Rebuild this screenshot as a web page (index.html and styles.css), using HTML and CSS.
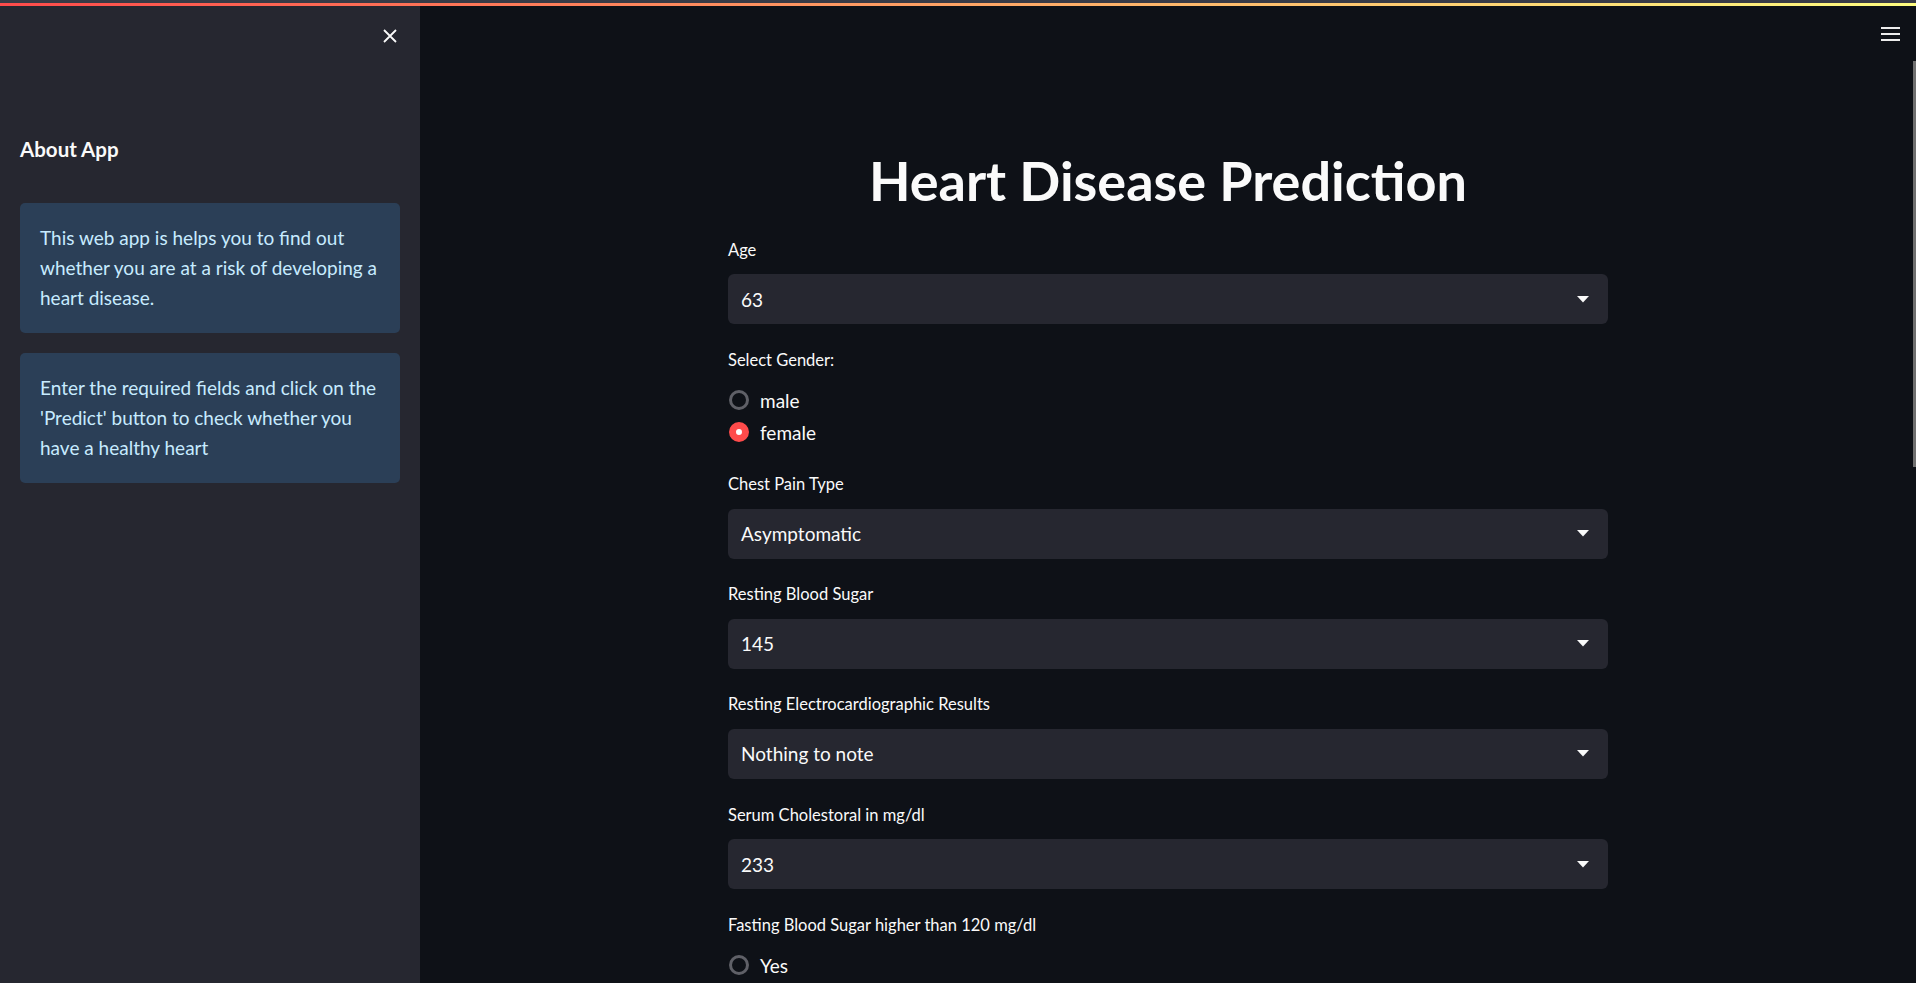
FILE: index.html
```html
<!DOCTYPE html>
<html lang="en">
<head>
<meta charset="utf-8">
<title>Heart Disease Prediction</title>
<link rel="stylesheet" href="styles.css">
</head>
<body>
<div class="page">
  <div class="topbar"><div class="topbar-dark"></div><div class="topbar-grad"></div></div>
  <div class="app">
    <aside class="sidebar">
      <div class="side-head">
        <svg class="close-icon" width="14" height="14" viewBox="0 0 14 14"><path d="M1 1 L13 13 M13 1 L1 13" stroke="#fafafa" stroke-width="1.8" fill="none"/></svg>
      </div>
      <h3 class="side-title">About App</h3>
      <div class="info">This web app is helps you to find out whether you are at a risk of developing a heart disease.</div>
      <div class="info">Enter the required fields and click on the 'Predict' button to check whether you have a healthy heart</div>
    </aside>
    <main class="main">
      <div class="main-head">
        <div class="menu"><span></span><span></span><span></span></div>
      </div>
      <div class="content">
        <h1 class="title">Heart Disease Prediction</h1>

        <div class="field">
          <div class="label">Age</div>
          <div class="select"><span>63</span><svg class="caret" width="12" height="7" viewBox="0 0 12 7"><path d="M0 0 H12 L6 6.5 Z" fill="#fafafa"/></svg></div>
        </div>

        <div class="field">
          <div class="label">Select Gender:</div>
          <div class="radios">
            <div class="radio"><span class="dot"></span><span>male</span></div>
            <div class="radio"><span class="dot on"></span><span>female</span></div>
          </div>
        </div>

        <div class="field">
          <div class="label">Chest Pain Type</div>
          <div class="select"><span>Asymptomatic</span><svg class="caret" width="12" height="7" viewBox="0 0 12 7"><path d="M0 0 H12 L6 6.5 Z" fill="#fafafa"/></svg></div>
        </div>

        <div class="field">
          <div class="label">Resting Blood Sugar</div>
          <div class="select"><span>145</span><svg class="caret" width="12" height="7" viewBox="0 0 12 7"><path d="M0 0 H12 L6 6.5 Z" fill="#fafafa"/></svg></div>
        </div>

        <div class="field">
          <div class="label">Resting Electrocardiographic Results</div>
          <div class="select"><span>Nothing to note</span><svg class="caret" width="12" height="7" viewBox="0 0 12 7"><path d="M0 0 H12 L6 6.5 Z" fill="#fafafa"/></svg></div>
        </div>

        <div class="field">
          <div class="label">Serum Cholestoral in mg/dl</div>
          <div class="select"><span>233</span><svg class="caret" width="12" height="7" viewBox="0 0 12 7"><path d="M0 0 H12 L6 6.5 Z" fill="#fafafa"/></svg></div>
        </div>

        <div class="field">
          <div class="label">Fasting Blood Sugar higher than 120 mg/dl</div>
          <div class="radios">
            <div class="radio"><span class="dot"></span><span>Yes</span></div>
          </div>
        </div>
      </div>
      <div class="scrollbar"></div>
    </main>
  </div>
</div>
</body>
</html>
```
FILE: styles.css
```css
html, body {
  margin: 0;
  padding: 0;
  height: 100%;
  overflow: hidden;
}
body {
  background: #0e1117;
  color: #fafafa;
  font-family: Lato, "Noto Sans", sans-serif;
}
.page {
  display: flex;
  flex-direction: column;
  height: 983px;
}
.topbar {
  flex: 0 0 6px;
  display: flex;
  flex-direction: column;
}
.topbar-dark {
  height: 3px;
  background: #393b46;
}
.topbar-grad {
  height: 3px;
  background: linear-gradient(90deg, #ff4b4b, #fffd80);
}
.app {
  flex: 1;
  display: flex;
  min-height: 0;
}
.sidebar {
  flex: 0 0 420px;
  background: #262730;
  padding: 0 20px;
  box-sizing: border-box;
  display: flex;
  flex-direction: column;
}
.side-head {
  flex: 0 0 60px;
  display: flex;
  align-items: center;
  justify-content: flex-end;
  padding-right: 3px;
}
.close-icon {
  display: block;
}
.side-title {
  flex-shrink: 0;
  margin: 68px 0 39px;
  font-size: 20.5px;
  line-height: 30px;
  font-weight: 700;
  color: #fafafa;
}
.info {
  flex-shrink: 0;
  background: #2b3f57;
  color: #c7ebff;
  border-radius: 5px;
  padding: 20px;
  font-size: 19px;
  line-height: 30px;
  margin-bottom: 20px;
}
.main {
  flex: 1;
  position: relative;
  display: flex;
  flex-direction: column;
  min-height: 0;
}
.main-head {
  flex: 0 0 60px;
  display: flex;
  justify-content: flex-end;
  padding-right: 16px;
}
.menu {
  margin-top: 21px;
  width: 19px;
  display: flex;
  flex-direction: column;
  gap: 4px;
}
.menu span {
  height: 2px;
  background: #ececec;
}
.content {
  flex-shrink: 0;
  width: 880px;
  margin: 0 auto;
  padding-top: 82px;
  display: flex;
  flex-direction: column;
  gap: 19.2px;
}
.title {
  margin: 0;
  text-align: center;
  font-size: 54px;
  line-height: 66px;
  font-weight: 700;
  color: #fafafa;
}
.label {
  font-size: 16.5px;
  line-height: 30px;
  padding-top: 1.5px;
  margin-bottom: 9.5px;
  color: #fafafa;
}
.select {
  height: 50px;
  background: #262730;
  border-radius: 6px;
  display: flex;
  align-items: center;
  justify-content: space-between;
  padding: 0 19px 0 13px;
  font-size: 19px;
  color: #fafafa;
}
.caret {
  display: block;
}
.radios {
  display: flex;
  flex-direction: column;
}
.radio {
  height: 32px;
  display: flex;
  align-items: center;
  gap: 11px;
  font-size: 19px;
  padding-left: 1px;
}
.dot {
  width: 20px;
  height: 20px;
  box-sizing: border-box;
  border-radius: 50%;
  border: 3px solid #5f6067;
  background: #0e1117;
}
.dot.on {
  border: 7px solid #ff4b4b;
  background: #ffffff;
}
.scrollbar {
  position: absolute;
  right: 0;
  top: 55px;
  width: 3px;
  height: 406px;
  background: #707070;
}
```
